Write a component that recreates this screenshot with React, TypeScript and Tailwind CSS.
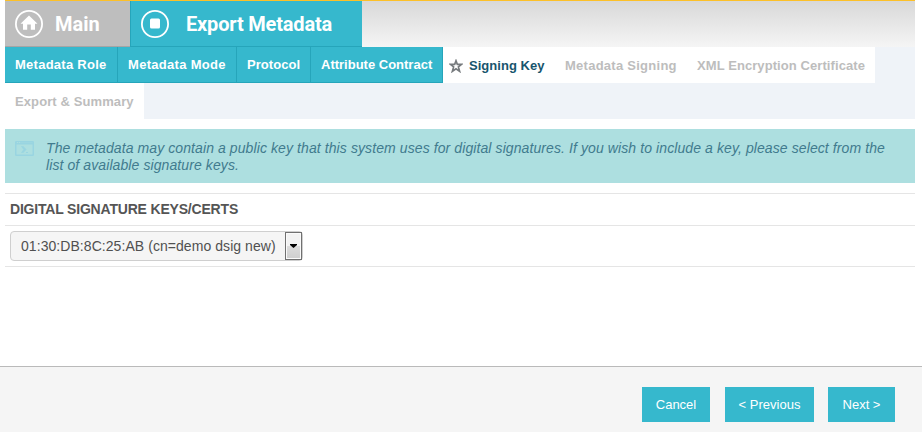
const STEPS: { label: string; state: 'done' | 'current' | 'todo'; size: string }[] = [
  { label: 'Metadata Role', state: 'done', size: 'w-[113px] tracking-[0.26px]' },
  { label: 'Metadata Mode', state: 'done', size: 'w-[119px] tracking-[0.3px]' },
  { label: 'Protocol', state: 'done', size: 'w-[74px] tracking-[0.05px]' },
  { label: 'Attribute Contract', state: 'done', size: 'w-[132px]' },
  { label: 'Signing Key', state: 'current', size: 'w-[112px] tracking-[0.03px]' },
  { label: 'Metadata Signing', state: 'todo', size: 'w-[132px] tracking-[0.26px]' },
  { label: 'XML Encryption Certificate', state: 'todo', size: 'w-[188px] tracking-[0.08px]' },
  { label: 'Export & Summary', state: 'todo', size: 'w-[139px] tracking-[0.1px]' },
]

const STEP_STYLE = {
  done: 'h-9 bg-[#36b8cd] text-white border-r border-b border-[#26a5ba] pl-[10px]',
  current: 'h-9 bg-white text-[#17556d] pl-[6px] pt-px',
  todo: 'h-9 bg-white text-[#bdbdbd] pl-[10px] pt-px',
}

function HomeIcon() {
  return (
    <svg width="28" height="28" viewBox="0 0 28 28" fill="none">
      <circle cx="14" cy="14" r="13.1" stroke="white" strokeWidth="1.8" />
      <path d="M14 5.5 5.5 13.8H8v6h4.2v-5.3h3.6v5.3H20v-6h2.5z" fill="white" />
    </svg>
  )
}

function StopIcon() {
  return (
    <svg width="28" height="28" viewBox="0 0 28 28" fill="none">
      <circle cx="14" cy="14" r="13.1" stroke="white" strokeWidth="1.8" />
      <rect x="9" y="8.5" width="10" height="10" rx="1.5" fill="white" />
    </svg>
  )
}

function StarIcon() {
  return (
    <svg width="14" height="14" viewBox="0 0 14 14" fill="none" className="mr-[6px] mt-px">
      <path d="M7 1.8 8.3 5.4h4.2L9.4 7.9l1.2 4.4L7 9.8l-3.6 2.5 1.2-4.4-3.1-2.5h4.2z" stroke="#777b7e" strokeWidth="1.7" />
    </svg>
  )
}

function ConsoleIcon() {
  return (
    <svg width="19" height="15" viewBox="0 0 19 15" fill="none" className="shrink-0">
      <rect x="0.75" y="0.75" width="17.5" height="13.5" rx="0.5" stroke="#99d5e1" strokeWidth="1.5" />
      <path d="M1 2.5h17" stroke="#99d5e1" strokeWidth="2" />
      <path d="M2 1.5h1M4 1.5h1" stroke="#addfe0" />
      <path d="M6.5 5.5h1.8l2.8 3-2.8 3H6.5L8.8 8.5z" fill="#99d5e1" stroke="#99d5e1" strokeWidth="0.6" />
      <path d="M11 11.5h2" stroke="#99d5e1" />
    </svg>
  )
}

function FooterButton({ label, width }: { label: string; width: string }) {
  return <button className={`h-[35px] bg-[#36b8cd] text-[13px] text-white ${width}`}>{label}</button>
}

export default function App() {
  return (
    <div className="flex h-[432px] w-[922px] flex-col bg-white font-['Liberation_Sans',Arial,sans-serif]">
      <header className="mx-[5px] w-[910px] border-t border-[#fcc028] bg-[linear-gradient(#d8d8d8,#f5f5f5)]">
        <div className="flex h-[46px] font-[Roboto,sans-serif] text-[20px] font-bold text-white">
          <div className="flex w-[125px] items-center gap-3 border-b border-[#a5a5a5] bg-[#bebebe] pl-[10px]">
            <HomeIcon />
            <span>Main</span>
          </div>
          <div className="flex w-[232px] items-center gap-[17px] border-b border-l border-[#26a5ba] bg-[#36b8cd] pl-[10px]">
            <StopIcon />
            <span className="tracking-[-0.18px] whitespace-nowrap">Export Metadata</span>
          </div>
        </div>
      </header>

      <nav className="mx-[5px] flex h-[72px] w-[910px] flex-wrap content-start bg-[#eff3f8] text-[13px] font-bold">
        {STEPS.map(s => (
          <div key={s.label} className={`flex items-center whitespace-nowrap ${s.size} ${STEP_STYLE[s.state]}`}>
            {s.state === 'current' && <StarIcon />}
            <span>{s.label}</span>
          </div>
        ))}
      </nav>

      <div className="mx-[5px] mt-[10px] flex h-[54px] w-[910px] bg-[#addfe0] pl-[10px] pt-3">
        <ConsoleIcon />
        <p className="-mt-px ml-3 w-[860px] text-[14px] leading-[17px] tracking-[0.094px] text-[#417b8e] italic">
          The metadata may contain a public key that this system uses for digital signatures. If you wish to include a key, please select from the
          <br />
          list of available signature keys.
        </p>
      </div>

      <section className="mx-[5px] mt-[10px] w-[910px] border-y border-[#e5e5e5] text-[#555]">
        <h2 className="flex h-8 items-center border-b border-[#e5e5e5] pl-[5px] text-[14px] font-bold tracking-[-0.19px]">DIGITAL SIGNATURE KEYS/CERTS</h2>
        <div className="h-10 pt-[5px] pl-[5px]">
          <div className="flex h-[30px] w-[293px] items-center justify-between rounded-[4px] border border-[#cfcfcf] bg-[#f5f5f5] pl-[10px] text-[14px] text-[#505050]">
            <span className="tracking-[0.06px] whitespace-nowrap">01:30:DB:8C:25:AB (cn=demo dsig new)</span>
            <div className="flex h-7 w-[17px] items-center justify-center border border-[#707070] bg-[linear-gradient(#f2f2f2_50%,#dcdcdc_50%,#cecece)] shadow-[inset_0_0_0_1px_#fafafa]">
              <svg width="7" height="4" viewBox="0 0 7 4">
                <path d="M0 0h7v1L3.5 4 0 1z" fill="black" />
              </svg>
            </div>
          </div>
        </div>
      </section>

      <footer className="mt-auto flex h-[66px] border-t border-[#bababa] bg-[#f5f5f5] pt-5 pl-[642px]">
        <FooterButton label="Cancel" width="w-[68px] mr-[15px]" />
        <FooterButton label="< Previous" width="w-[89px] mr-[14px]" />
        <FooterButton label="Next >" width="w-[67px]" />
      </footer>
    </div>
  )
}
